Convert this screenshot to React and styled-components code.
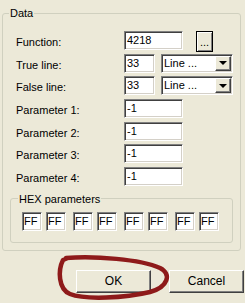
import React from 'react';
import styled, { createGlobalStyle } from 'styled-components';

const Global = createGlobalStyle`
  html, body { margin: 0; padding: 0; background: #ece9d8; }
  body { font-family: "Liberation Sans", Arial, sans-serif; font-size: 11px; color: #000; }
  * { box-sizing: border-box; }
`;

const Dialog = styled.div`
  position: relative;
  width: 245px;
  height: 303px;
  padding: 7px 0 0 2px;
  display: flex;
  flex-direction: column;
  overflow: hidden;
`;

const Group = styled.fieldset`
  margin: ${p => p.$margin || '0'};
  width: ${p => p.$width}px;
  border: 1px solid #d0d0bf;
  border-radius: 3px;
  padding: ${p => p.$pad};
  min-width: 0;
`;

const Legend = styled.legend`
  padding: 0 1px;
  line-height: 12px;
  font-size: 11px;
`;

const Form = styled.div`
  display: grid;
  grid-template-columns: 108px auto;
  grid-template-rows: repeat(7, 19px);
  row-gap: 3.67px;
  margin-left: 7px;
`;

const Label = styled.div`
  line-height: 19px;
  padding-top: 2px;
  white-space: nowrap;
`;

const Fields = styled.div`
  display: flex;
  align-items: flex-start;
  gap: ${p => p.$gap || 0}px;
`;

const TextBox = styled.div`
  width: ${p => p.$w}px;
  height: 19px;
  background: #fff;
  border-top: 1px solid #808080;
  border-left: 1px solid #808080;
  border-bottom: 1px solid #fff;
  border-right: 1px solid #fff;
  box-shadow: inset 1px 1px 0 #404040, inset -1px -1px 0 #d4d0c8;
  padding-left: ${p => p.$pl ?? 2}px;
  line-height: 17px;
  white-space: nowrap;
  overflow: hidden;
`;

const Combo = styled(TextBox)`
  display: flex;
  align-items: center;
  justify-content: space-between;
  padding-right: 1px;
`;

const ComboText = styled.span`
  line-height: 17px;
`;

const ArrowBtn = styled.div`
  width: 16px;
  height: 15px;
  background: #ece9d8;
  border-top: 1px solid #fff;
  border-left: 1px solid #fff;
  border-bottom: 1px solid #404040;
  border-right: 1px solid #404040;
  box-shadow: inset -1px -1px 0 #808080;
  display: flex;
  align-items: center;
  justify-content: center;
`;

const Triangle = styled.div`
  width: 0;
  height: 0;
  border-left: 4px solid transparent;
  border-right: 4px solid transparent;
  border-top: 4px solid #000;
`;

const DotsBtn = styled.div`
  width: 17px;
  height: 21px;
  margin-left: 7px;
  background: #ece9d8;
  border: 1px solid #000;
  box-shadow: inset 1px 1px 0 #fff, inset -1px -1px 0 #808080;
  display: flex;
  align-items: flex-end;
  justify-content: center;
  padding-bottom: 4px;
  line-height: 10px;
  font-size: 11px;
`;

const HexRow = styled.div`
  display: flex;
  gap: 7px;
  padding-left: 4px;
`;

const HexPair = styled.div`
  display: flex;
  gap: 4px;
`;

const ButtonRow = styled.div`
  display: flex;
  gap: 18px;
  margin-top: 19px;
  padding-left: 74px;
`;

const Button = styled.div`
  width: 75px;
  height: 23px;
  background: #ece9d8;
  border-top: 1px solid #fff;
  border-left: 1px solid #fff;
  border-bottom: 1px solid #404040;
  border-right: 1px solid #404040;
  box-shadow: inset -1px -1px 0 #808080;
  display: flex;
  align-items: center;
  justify-content: center;
  font-size: 12px;
`;

const Annotation = styled.svg`
  position: absolute;
  left: 0;
  top: 0;
  pointer-events: none;
`;

const rows = [
  { label: 'Function:', type: 'fn', value: '4218' },
  { label: 'True line:', type: 'combo', value: '33' },
  { label: 'False line:', type: 'combo', value: '33' },
  { label: 'Parameter 1:', value: '-1' },
  { label: 'Parameter 2:', value: '-1' },
  { label: 'Parameter 3:', value: '-1' },
  { label: 'Parameter 4:', value: '-1' },
];

export default function App() {
  return (
    <>
      <Global />
      <Dialog>
        <Group $width={239} $pad="12px 6px 7px 6px">
          <Legend>Data</Legend>
          <Form>
            {rows.map(r => (
              <React.Fragment key={r.label}>
                <Label>{r.label}</Label>
                {r.type === 'combo' ? (
                  <Fields $gap={6}>
                    <TextBox $w={31}>{r.value}</TextBox>
                    <Combo $w={72}>
                      <ComboText>Line ...</ComboText>
                      <ArrowBtn><Triangle /></ArrowBtn>
                    </Combo>
                  </Fields>
                ) : (
                  <Fields $gap={6}>
                    <TextBox $w={59}>{r.value}</TextBox>
                    {r.type === 'fn' && <DotsBtn>...</DotsBtn>}
                  </Fields>
                )}
              </React.Fragment>
            ))}
          </Form>
          <Group $width={223} $margin="7px 0 0 1px" $pad="7px 0 11px 7px">
            <Legend>HEX parameters</Legend>
            <HexRow>
              {[0, 1, 2, 3].map(i => (
                <HexPair key={i}>
                  <TextBox $w={20} $pl={1}>FF</TextBox>
                  <TextBox $w={20} $pl={1}>FF</TextBox>
                </HexPair>
              ))}
            </HexRow>
          </Group>
        </Group>
        <ButtonRow>
          <Button>OK</Button>
          <Button>Cancel</Button>
        </ButtonRow>
        <Annotation width="245" height="303" viewBox="0 0 245 303">
          <path
            d="M 66 258 C 95 256, 140 259, 160 268 C 172 274, 168 287, 150 292 C 125 298, 85 300, 70 294 C 58 289, 58 270, 63 260 L 68 258"
            fill="none"
            stroke="#8e1a1a"
            strokeWidth="4.5"
            strokeLinecap="round"
            strokeLinejoin="round"
          />
        </Annotation>
      </Dialog>
    </>
  );
}
